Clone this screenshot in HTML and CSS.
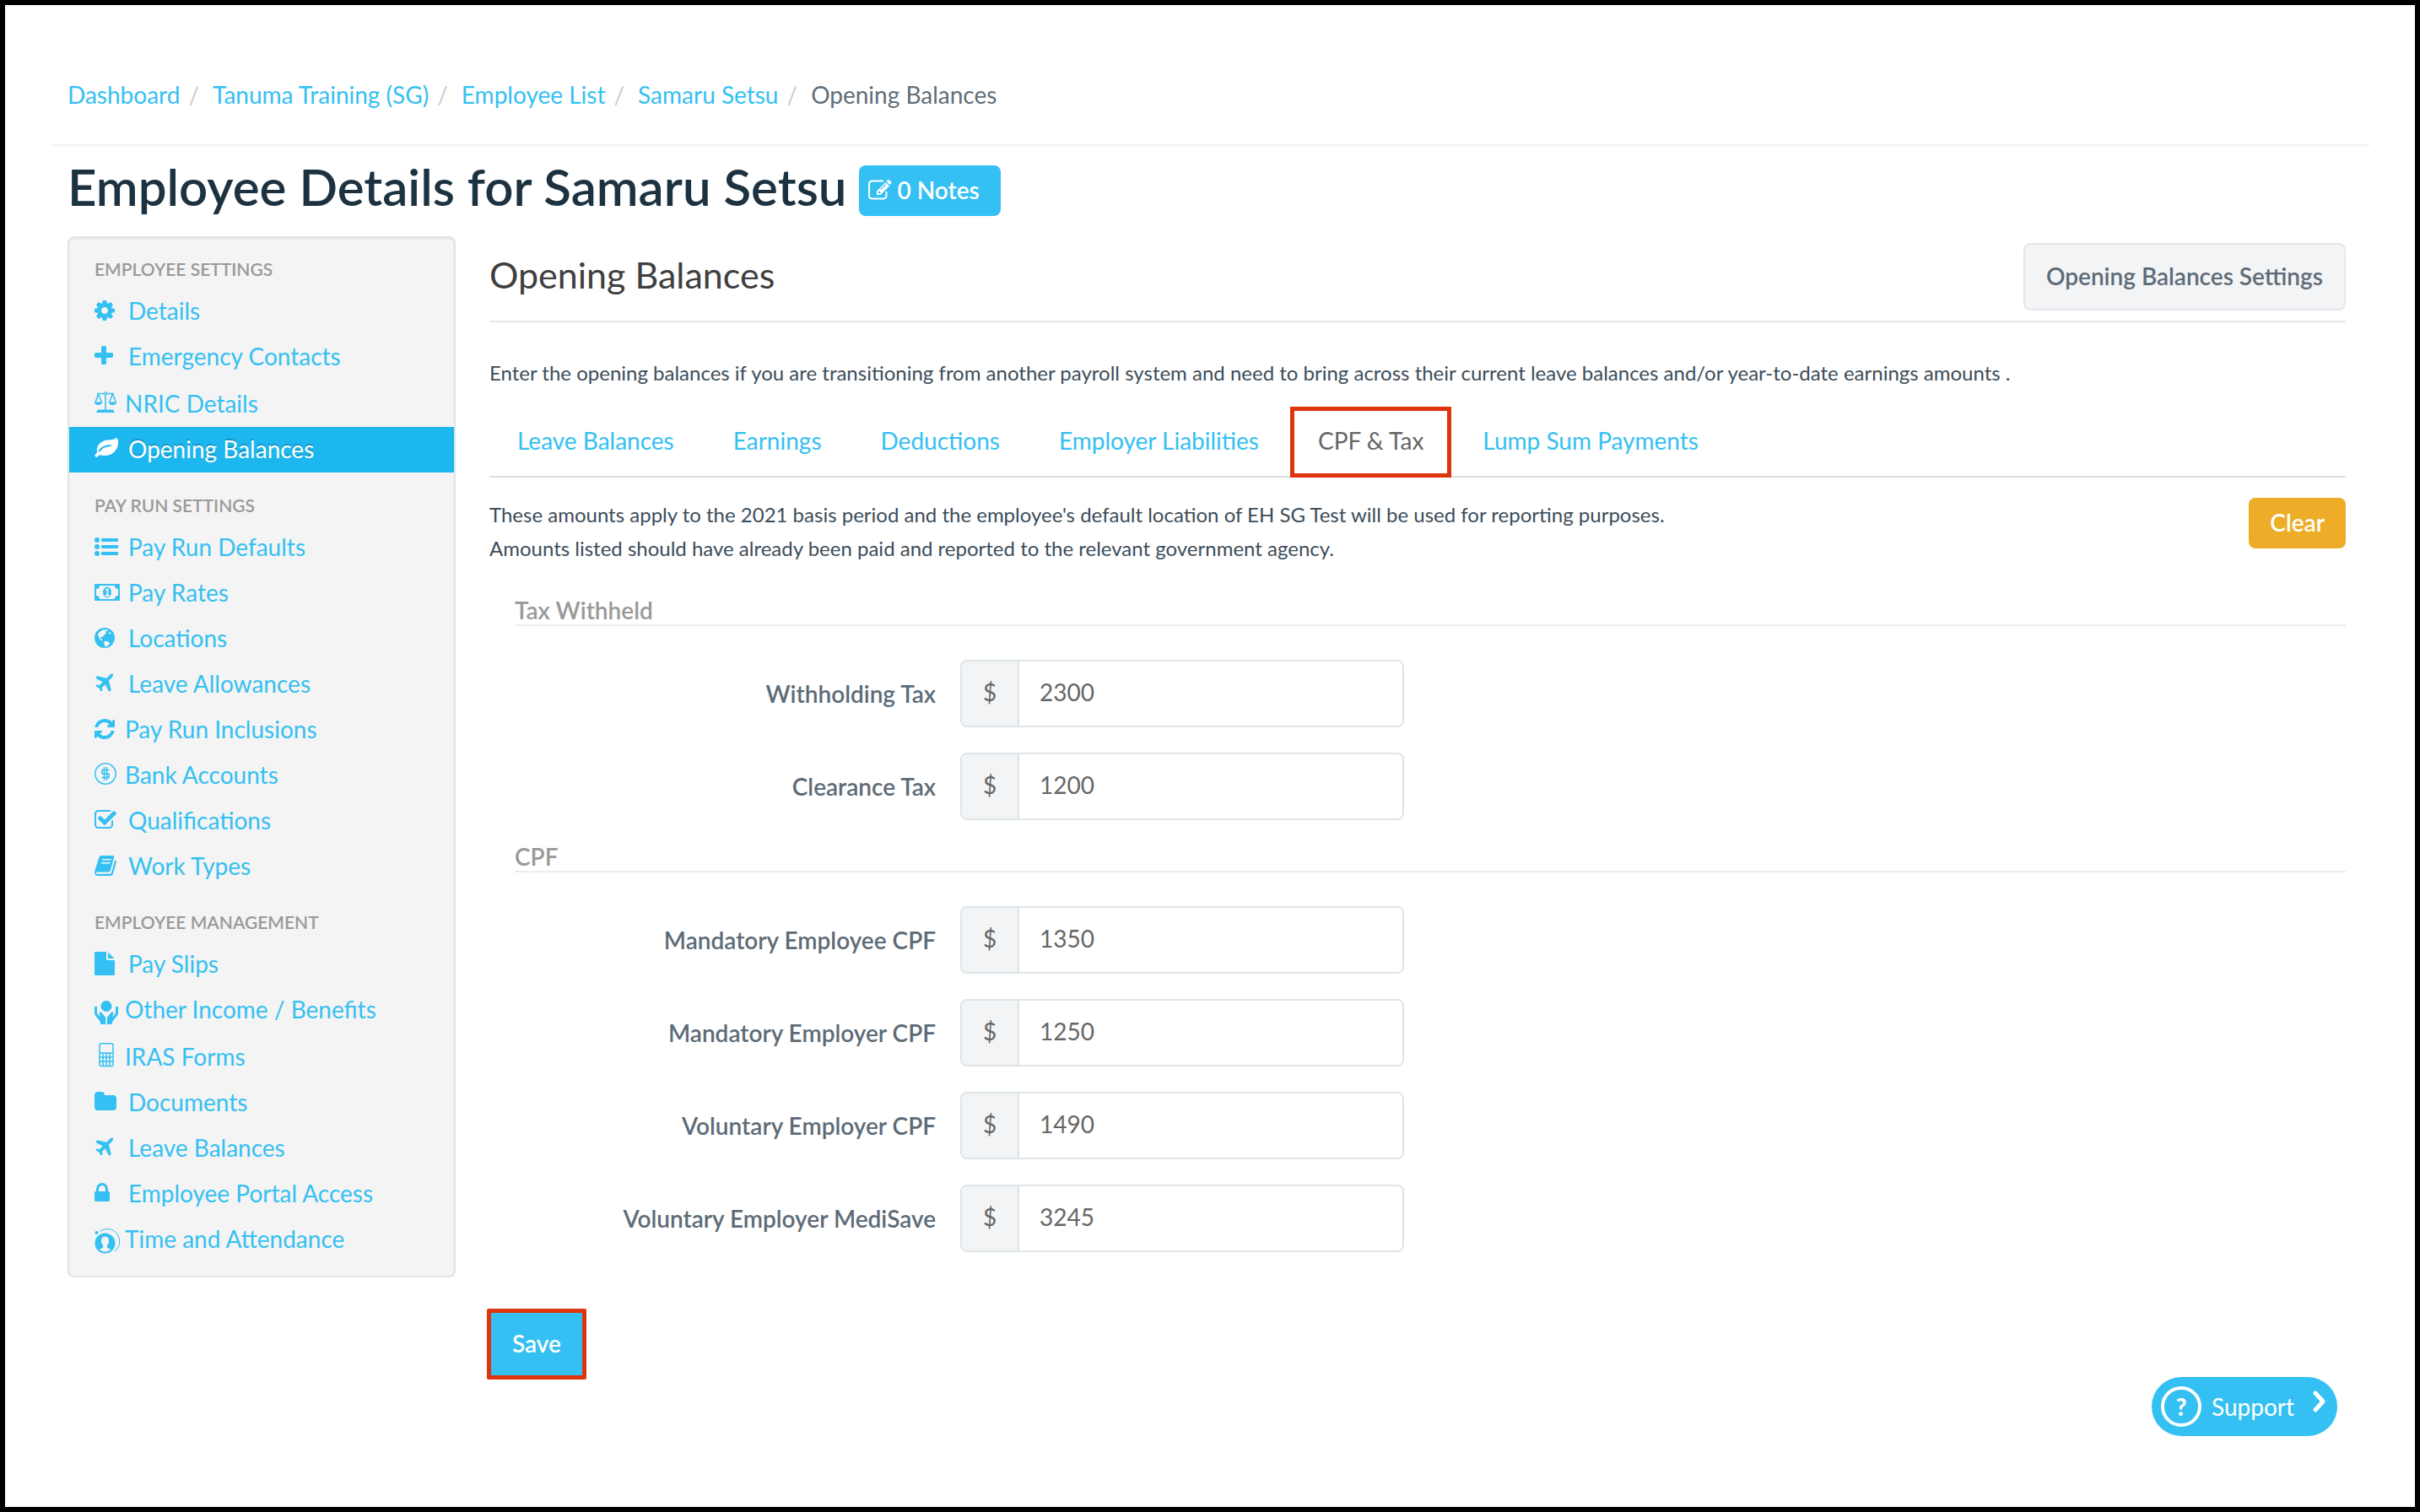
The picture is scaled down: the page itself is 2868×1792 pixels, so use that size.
FILE: index.html
```html
<!DOCTYPE html>
<html lang="en">
<head>
    <meta charset="UTF-8">
    <meta name="viewport" content="width=device-width, initial-scale=1.0">
    <title>Opening Balances</title>
    <link rel="stylesheet" href="styles.css">
</head>
<body>
    <svg class="sprite" aria-hidden="true">
        <symbol id="icon-plane" viewBox="0 0 28 28">
            <path d="M21.600 2.400c1 1 .2 3.300-1.300 4.800l-3.400 3.400 2.800 11.200-2.400 2.100-4.700-8.600-3.700 3.600.6 3.400-1.700 1.500-2.400-4.200-4.300-2.500 1.500-1.700 3.500.6 3.500-3.700-8.400-4.600 2.100-2.400 11 2.500 3.200-3.300c1.500-1.500 3.200-2.900 4.100-2.100z"/>
        </symbol>
    </svg>

    <div class="page">
        <nav class="breadcrumb" aria-label="Breadcrumb">
            <a href="#">Dashboard</a><span class="divider">/</span>
            <a href="#">Tanuma Training (SG)</a><span class="divider">/</span>
            <a href="#">Employee List</a><span class="divider">/</span>
            <a href="#">Samaru Setsu</a><span class="divider">/</span>
            <span class="current">Opening Balances</span>
        </nav>

        <div class="content">
            <div class="page-title">
                <h1>Employee Details for Samaru Setsu</h1>
                <button class="btn btn-info btn-notes" type="button">
                    <svg class="icon" viewBox="0 0 28 28">
                        <path d="M19 3.500H6Q2 3.500 2 7.500v13.500Q2 24.500 6 24.500h12.500q4 0 4-4v-4.500" fill="none" stroke="currentColor" stroke-width="2"/>
                        <path fill-rule="evenodd" d="M11 15.500 21.500 5l4.500 4.500L15.500 20H11zM13 16v2.200h1.800l1-1-2-2zM15.200 13.200l.8.800 6-6-.8-.8zM22.500 4l1.500-1.500q1-1 2 0L28 4.500q1 1 0 2L26.700 8z"/>
                    </svg>
                    0 Notes
                </button>
            </div>

            <div class="columns">
                <aside class="sidebar">
                    <div class="nav-group">
                        <h3 class="nav-header">EMPLOYEE SETTINGS</h3>
                        <a class="nav-item" href="#">
                            <svg class="icon" viewBox="128 0 1792 1792"><path d="M1152 896q0-106-75-181t-181-75-181 75-75 181 75 181 181 75 181-75 75-181zm512-109v222q0 12-8 23t-20 13l-185 28q-19 54-39 91 35 50 107 138 10 12 10 25t-9 23q-27 37-99 108t-94 71q-12 0-26-9l-138-108q-44 23-91 38-16 136-29 186-7 28-36 28h-222q-14 0-24.500-8.500t-11.500-21.500l-28-184q-49-16-90-37l-141 107q-10 9-25 9-14 0-25-11-126-114-165-168-7-10-7-23 0-12 8-23 15-21 51-66.500t54-70.500q-27-50-41-99l-183-27q-13-2-21-12.500t-8-23.500v-222q0-12 8-23t19-13l186-28q14-46 39-92-40-57-107-138-10-12-10-24 0-10 9-23 26-36 98.500-107.500t94.500-71.500q13 0 26 10l138 107q44-23 91-38 16-136 29-186 7-28 36-28h222q14 0 24.500 8.500t11.500 21.500l28 184q49 16 90 37l142-107q9-9 24-9 13 0 25 10 129 119 165 170 7 8 7 22 0 12-8 23-15 21-51 66.500t-54 70.500q26 50 41 98l183 28q13 2 21 12.500t8 23.500z"/></svg>
                            Details
                        </a>
                        <a class="nav-item" href="#">
                            <svg class="icon" viewBox="192 0 1792 1792"><path d="M1600 736v192q0 40-28 68t-68 28h-416v416q0 40-28 68t-68 28h-192q-40 0-68-28t-28-68v-416h-416q-40 0-68-28t-28-68v-192q0-40 28-68t68-28h416v-416q0-40 28-68t68-28h192q40 0 68 28t28 68v416h416q40 0 68 28t28 68z"/></svg>
                            Emergency Contacts
                        </a>
                        <a class="nav-item nav-item-image nav-item-tall" href="#">
                            <svg class="icon" viewBox="0 0 28 28">
                                <path d="M3 2.500h20M13 4v18M4.500 3 1 13M4.500 3 8.500 13M21.500 3 17.500 13M21.500 3 25.500 13" fill="none" stroke="currentColor" stroke-width="1.500"/>
                                <circle cx="13" cy="2.500" r="2.200"/><circle cx="13" cy="2.500" r="1" fill="#f4f4f4"/>
                                <path d="M0 12.500h9c0 2-1.500 3.500-4.500 3.500S0 14.500 0 12.500zM17 12.500h9c0 2-1.500 3.500-4.500 3.500S17 14.500 17 12.500zM4 21.500h18l2 3.500H2z"/>
                            </svg>
                            NRIC Details
                        </a>
                        <a class="nav-item active" href="#" aria-current="page">
                            <svg class="icon" viewBox="0 0 28 28"><path fill-rule="evenodd" d="M26.500 1c2.500 3 2.500 11-3 16.500-4 4-10 5.500-15.500 4-2-.5-3 0-4.500 2-1.500 1-3-.5-3.200-1.700C1 20 3.500 19 3 17.500 2 12 5 6.500 12 4.300c5-1.500 10-.3 13-2.800zM6 17.200c4-4.500 7.500-6.200 13.300-6.300.9-.1.900-1.600 0-1.700-6.500-.2-11 2-14.600 6.500-.7 1 .4 2.200 1.300 1.500z"/></svg>
                            Opening Balances
                        </a>
                    </div>

                    <div class="nav-group">
                        <h3 class="nav-header">PAY RUN SETTINGS</h3>
                        <a class="nav-item" href="#">
                            <svg class="icon" viewBox="0 0 28 28"><circle cx="3" cy="6" r="3"/><circle cx="3" cy="14" r="3"/><circle cx="3" cy="22" r="3"/><rect x="8" y="4" width="20" height="4" rx="1"/><rect x="8" y="12" width="20" height="4" rx="1"/><rect x="8" y="20" width="20" height="4" rx="1"/></svg>
                            Pay Run Defaults
                        </a>
                        <a class="nav-item" href="#">
                            <svg class="icon" viewBox="0 0 28 28">
                                <path fill-rule="evenodd" d="M1 4h28q1 0 1 1v18q0 1-1 1H1q-1 0-1-1V5q0-1 1-1zM6 6q0 4-4 4v8q4 0 4 4h18q0-4 4-4v-8q-4 0-4-4z"/>
                                <ellipse cx="15" cy="14" rx="5" ry="6.500"/>
                                <path d="M13 11.500 15.500 10v7.500M12.500 18h5" fill="none" stroke="#f4f4f4" stroke-width="1.800"/>
                            </svg>
                            Pay Rates
                        </a>
                        <a class="nav-item" href="#">
                            <svg class="icon" viewBox="0 0 28 28">
                                <circle cx="12" cy="14" r="12"/>
                                <path fill="#f4f4f4" d="M4.500 8.500q3-3.500 6.500-4.500l2.500.5 2.500 0-1 1.500-2.500.5 1.500 2-3 2.500-1.500 2-2-.5-.5 2 2 1 .5 2-3-1.500L5 12.500 4 11zM17.500 6.500l2 2-1 1-1.500-1zM11 19l2.500-1.500 3.500 1.500 1.500 1.500-3 3-3 1-1-3.500z"/>
                            </svg>
                            Locations
                        </a>
                        <a class="nav-item" href="#">
                            <svg class="icon"><use href="#icon-plane"/></svg>
                            Leave Allowances
                        </a>
                        <a class="nav-item nav-item-image" href="#">
                            <svg class="icon" viewBox="128 0 1792 1792"><path d="M1639 1056q0 5-1 7-64 268-268 434.500t-478 166.500q-146 0-282.500-55t-243.500-157l-129 129q-19 19-45 19t-45-19-19-45v-448q0-26 19-45t45-19h448q26 0 45 19t19 45-19 45l-137 137q71 66 161 102t187 36q134 0 250-65t186-179q11-17 53-117 8-23 30-23h192q13 0 22.500 9.500t9.500 22.500zm25-800v448q0 26-19 45t-45 19h-448q-26 0-45-19t-19-45 19-45l138-138q-148-137-349-137-134 0-250 65t-186 179q-11 17-53 117-8 23-30 23h-199q-13 0-22.500-9.500t-9.500-22.500v-7q65-268 270-434.500t480-166.500q146 0 284 55.500t245 156.500l130-129q19-19 45-19t45 19 19 45z"/></svg>
                            Pay Run Inclusions
                        </a>
                        <a class="nav-item nav-item-image" href="#">
                            <svg class="icon" viewBox="0 0 28 28">
                                <g fill="none" stroke="currentColor" stroke-width="1.500"><circle cx="13" cy="13" r="12.200"/><path d="M17.500 8.500H9v4.500h8v4.500H8.500M11.500 5v16M14.500 5v16"/></g>
                            </svg>
                            Bank Accounts
                        </a>
                        <a class="nav-item" href="#">
                            <svg class="icon" viewBox="64 0 1792 1792"><path d="M1472 930v318q0 119-84.500 203.500t-203.500 84.500h-832q-119 0-203.500-84.500t-84.500-203.500v-832q0-119 84.500-203.500t203.500-84.500h832q63 0 117 25 15 7 18 23 3 17-9 29l-49 49q-10 10-23 10-3 0-9-2-23-6-45-6h-832q-66 0-113 47t-47 113v832q0 66 47 113t113 47h832q66 0 113-47t47-113v-254q0-13 9-22l64-64q10-10 23-10 6 0 12 3 20 8 20 29zm231-489l-814 814q-24 24-57 24t-57-24l-430-430q-24-24-24-57t24-57l110-110q24-24 57-24t57 24l263 263 647-647q24-24 57-24t57 24l110 110q24 24 24 57t-24 57z"/></svg>
                            Qualifications
                        </a>
                        <a class="nav-item" href="#">
                            <svg class="icon" viewBox="0 0 28 28">
                                <path fill-rule="evenodd" d="M8 2h13.500q2 0 1.500 2.200L19 19.500q-.5 2-2.500 2H3q-1.500 0-1.300 1.200.2 1.100 1.700 1.100H18q1.500 0 2-1.500L24.200 7.500q2.200.8 1.600 2.800L22 23.500Q21.200 26 18.500 26H3.500Q0 26 .2 22.500L.5 19.500 5.500 4Q6.200 2 8 2zM9.500 6 9 7.600h10.500L20 6zM8.300 10l-.5 1.600h10.500l.5-1.600z"/>
                            </svg>
                            Work Types
                        </a>
                    </div>

                    <div class="nav-group">
                        <h3 class="nav-header">EMPLOYEE MANAGEMENT</h3>
                        <a class="nav-item" href="#">
                            <svg class="icon" viewBox="0 0 28 28"><path d="M1.500 0H14v8.500q0 1.500 1.500 1.500H24v16.500q0 1.500-1.500 1.500h-21Q0 28 0 26.500v-25Q0 0 1.500 0zM16 .5 23.500 8H16z"/></svg>
                            Pay Slips
                        </a>
                        <a class="nav-item nav-item-image" href="#">
                            <svg class="icon" viewBox="0 0 28 28">
                                <circle cx="14" cy="10.500" r="6.500"/>
                                <path d="M0 12q0-1.500 1.500-1.500T3 12v7l3 3.500 1 .3-1.500-3.500q-.3-1.800 1.300-2 1 0 1.700 1l4 4.700q.7 1 .7 2.200V32H7.500Q7 28.500 5 26.500L1 21.500Q0 20 0 18.500zM28 12q0-1.500-1.500-1.500T25 12v7l-3 3.500-1 .3 1.500-3.500q.3-1.800-1.300-2-1 0-1.700 1l-4 4.700q-.7 1-.7 2.200V32h5.700q.5-3.500 2.500-5.500l4-5q1-1.500 1-3z"/>
                            </svg>
                            Other Income / Benefits
                        </a>
                        <a class="nav-item nav-item-image nav-item-tall" href="#">
                            <svg class="icon" viewBox="0 0 28 28">
                                <path d="M6 1.500Q6-1.200 8-1.200h12q2 0 2 2.700v22q0 2-2 2H8q-2 0-2-2zM6 10h16M6 15h16M6 20h16M10 10v15M14 10v15M18 10v15" fill="none" stroke="currentColor" stroke-width="1.500"/>
                            </svg>
                            IRAS Forms
                        </a>
                        <a class="nav-item" href="#">
                            <svg class="icon" viewBox="64 0 1792 1792"><path d="M1728 608v704q0 92-66 158t-158 66h-1216q-92 0-158-66t-66-158v-960q0-92 66-158t158-66h320q92 0 158 66t66 158v32h672q92 0 158 66t66 158z"/></svg>
                            Documents
                        </a>
                        <a class="nav-item" href="#">
                            <svg class="icon"><use href="#icon-plane"/></svg>
                            Leave Balances
                        </a>
                        <a class="nav-item" href="#">
                            <svg class="icon" viewBox="320 0 1792 1792"><path d="M640 768h512v-192q0-106-75-181t-181-75-181 75-75 181v192zm832 96v576q0 40-28 68t-68 28h-960q-40 0-68-28t-28-68v-576q0-40 28-68t68-28h32v-192q0-184 132-316t316-132 316 132 132 316v192h32q40 0 68 28t28 68z"/></svg>
                            Employee Portal Access
                        </a>
                        <a class="nav-item nav-item-image" href="#">
                            <svg class="icon" viewBox="0 0 28 28">
                                <path d="M6 5.500A13.500 13.500 0 0 1 24 29" fill="none" stroke="currentColor"/>
                                <circle cx="2.500" cy="7" r="2"/>
                                <circle cx="12.500" cy="19.500" r="12"/>
                                <path fill="#f4f4f4" d="M12.500 11.500q4.500 0 4.500 5 0 4-2.200 5.500v2q0 1 4.700 2.800-3 2.700-7 2.700T5.500 26.800q4.700-1.800 4.700-2.800v-2Q8 20.500 8 16.500q0-5 4.500-5z"/>
                            </svg>
                            Time and Attendance
                        </a>
                    </div>
                </aside>

                <main class="main">
                    <div class="section-header">
                        <h2>Opening Balances</h2>
                        <button class="btn btn-default" type="button">Opening Balances Settings</button>
                    </div>

                    <p class="intro">Enter the opening balances if you are transitioning from another payroll system and need to bring across their current leave balances and/or year-to-date earnings amounts .</p>

                    <nav class="tabs" aria-label="Balances">
                        <a class="tab" href="#">Leave Balances</a>
                        <a class="tab" href="#">Earnings</a>
                        <a class="tab" href="#">Deductions</a>
                        <a class="tab" href="#">Employer Liabilities</a>
                        <a class="tab active" href="#" aria-current="page">CPF &amp; Tax</a>
                        <a class="tab" href="#">Lump Sum Payments</a>
                    </nav>

                    <form>
                        <div class="notice">
                            <p>These amounts apply to the 2021 basis period and the employee's default location of EH SG Test will be used for reporting purposes.<br>
                            Amounts listed should have already been paid and reported to the relevant government agency.</p>
                            <button class="btn btn-warning" type="button">Clear</button>
                        </div>

                        <section class="field-group">
                            <h4 class="legend">Tax Withheld</h4>
                            <div class="field">
                                <label for="withholding-tax">Withholding Tax</label>
                                <div class="input-group">
                                    <span class="addon">$</span>
                                    <input type="text" id="withholding-tax" value="2300">
                                </div>
                            </div>
                            <div class="field">
                                <label for="clearance-tax">Clearance Tax</label>
                                <div class="input-group">
                                    <span class="addon">$</span>
                                    <input type="text" id="clearance-tax" value="1200">
                                </div>
                            </div>
                        </section>

                        <section class="field-group">
                            <h4 class="legend">CPF</h4>
                            <div class="field">
                                <label for="mandatory-employee">Mandatory Employee CPF</label>
                                <div class="input-group">
                                    <span class="addon">$</span>
                                    <input type="text" id="mandatory-employee" value="1350">
                                </div>
                            </div>
                            <div class="field">
                                <label for="mandatory-employer">Mandatory Employer CPF</label>
                                <div class="input-group">
                                    <span class="addon">$</span>
                                    <input type="text" id="mandatory-employer" value="1250">
                                </div>
                            </div>
                            <div class="field">
                                <label for="voluntary-employer">Voluntary Employer CPF</label>
                                <div class="input-group">
                                    <span class="addon">$</span>
                                    <input type="text" id="voluntary-employer" value="1490">
                                </div>
                            </div>
                            <div class="field">
                                <label for="medisave">Voluntary Employer MediSave</label>
                                <div class="input-group">
                                    <span class="addon">$</span>
                                    <input type="text" id="medisave" value="3245">
                                </div>
                            </div>
                        </section>

                        <button class="btn btn-info btn-save" type="submit">Save</button>
                    </form>
                </main>
            </div>
        </div>

        <button class="support" type="button">
            <span class="support-icon">?</span>
            Support
            <svg class="support-arrow" viewBox="0 0 18 28"><path d="M4 4l9 10-9 10" fill="none" stroke="currentColor" stroke-width="5" stroke-linecap="round" stroke-linejoin="round"/></svg>
        </button>
    </div>
</body>
</html>
```
FILE: styles.css
```css
* {
    box-sizing: border-box;
}
body {
    margin: 0;
    background: #fff;
    color: #3c4d5a;
    font-family: Lato, "Open Sans", sans-serif;
    font-size: 28px;
}
h1, h2, h3, h4, p {
    margin: 0;
}
a {
    color: #34c0f2;
    text-decoration: none;
}
.sprite {
    position: absolute;
    width: 0;
    height: 0;
}
.icon {
    width: 28px;
    height: 28px;
    flex: none;
    overflow: visible;
    fill: currentColor;
}
.page {
    min-height: 100vh;
    padding: 0 54px;
    border: 6px solid #000;
}

/* Breadcrumb */
.breadcrumb {
    display: flex;
    padding: 86px 20px 39px;
    border-bottom: 2px solid #f2f2f2;
    line-height: 40px;
}
.breadcrumb .divider {
    padding: 0 16px 0 10px;
    color: #ccc;
}
.breadcrumb .current {
    color: #616e79;
}

.content {
    padding: 23px 28px 0 20px;
}
.page-title {
    display: flex;
    align-items: center;
    gap: 14px;
    margin-bottom: 24px;
}
.page-title h1 {
    padding-bottom: 10px;
    color: #1d3240;
    font-size: 60px;
    font-weight: 600;
    line-height: 50px;
}

/* Buttons */
.btn {
    height: 60px;
    padding: 0 25px 2px;
    border: 0;
    border-radius: 8px;
    color: #fff;
    font-family: inherit;
    font-size: 28px;
    font-weight: 600;
    white-space: nowrap;
    cursor: pointer;
}
.btn-info {
    background: #34c0f2;
}
.btn-warning {
    background: #edad28;
}
.btn-default {
    height: 80px;
    border: 2px solid #e4e8ec;
    background: #f3f4f6;
    color: #5d6b77;
}
.btn-notes {
    display: flex;
    align-items: center;
    gap: 8px;
    padding-left: 10px;
}
.btn-save {
    height: 84px;
    margin: 67px 0 0 -3px;
    border: 5px solid #df350d;
    border-radius: 2px;
}

.columns {
    display: flex;
    align-items: flex-start;
    gap: 40px;
}

/* Sidebar */
.sidebar {
    flex: 0 0 460px;
    padding: 20px 0 16px;
    border: 2px solid #e3e3e3;
    border-radius: 8px;
    background: #f4f4f4;
    box-shadow: inset 0 2px 2px rgba(0, 0, 0, .05);
}
.nav-group + .nav-group {
    margin-top: 22px;
}
.nav-header {
    padding: 0 30px 6px;
    color: #999;
    font-size: 21px;
    font-weight: 600;
    line-height: 34px;
}
.nav-item {
    display: flex;
    align-items: center;
    gap: 12px;
    height: 54px;
    padding: 0 30px 2px;
}
.nav-item-image {
    gap: 8px;
}
.nav-item-tall {
    height: 56px;
    padding-bottom: 0;
}
.nav-item.active {
    background: #1cb7ee;
    color: #fff;
    text-shadow: 0 -2px 0 rgba(0, 0, 0, .2);
}

/* Main */
.main {
    flex: 1;
    min-width: 0;
    padding-top: 8px;
}
.section-header {
    display: flex;
    align-items: center;
    justify-content: space-between;
    padding-bottom: 12px;
    border-bottom: 2px solid #e5e5e5;
}
.section-header h2 {
    padding-bottom: 6px;
    color: #3f3f3f;
    font-size: 43px;
    font-weight: 400;
}
.intro,
.notice {
    font-size: 24px;
    line-height: 40px;
}
.intro {
    margin: 40px 0 20px;
}
.tabs {
    display: flex;
    gap: 4px;
    border-bottom: 2px solid #ddd;
}
.tab {
    padding: 20px 33px 22px;
    line-height: 40px;
}
.tab.active {
    margin-bottom: -2px;
    box-shadow: inset 0 0 0 5px #df350d;
    color: #666;
}
.notice {
    display: flex;
    align-items: flex-start;
    justify-content: space-between;
    margin: 24px 0 36px;
}

/* Form fields */
.field-group {
    margin-top: 26px;
    padding-left: 30px;
}
.legend {
    margin-bottom: 40px;
    border-bottom: 2px solid #eee;
    color: #999;
    font-size: 28px;
    font-weight: 600;
    line-height: 34px;
}
.field {
    display: grid;
    grid-template-columns: 23% minmax(0, 526px);
    column-gap: 29px;
    align-items: center;
}
.field + .field {
    margin-top: 30px;
}
.field label {
    color: #5d6b77;
    font-weight: 600;
    text-align: right;
}
.input-group {
    display: flex;
    height: 80px;
    overflow: hidden;
    border: 2px solid #dee5e9;
    border-radius: 8px;
}
.addon {
    width: 68px;
    padding-bottom: 4px;
    border-right: 2px solid #dee5e9;
    background: #f3f4f6;
    color: #666;
    line-height: 72px;
    text-align: center;
}
.input-group input {
    flex: 1;
    min-width: 0;
    padding: 0 24px 4px;
    border: 0;
    outline: 0;
    color: #666;
    font-family: inherit;
    font-size: 28px;
}

/* Support launcher */
.support {
    position: fixed;
    right: 98px;
    bottom: 90px;
    display: flex;
    align-items: center;
    gap: 12px;
    width: 220px;
    height: 70px;
    padding: 0 12px 0 11px;
    border: 0;
    border-radius: 35px;
    background: #34c0f2;
    color: #fff;
    font-family: inherit;
    font-size: 28px;
    cursor: pointer;
}
.support-icon {
    width: 48px;
    height: 48px;
    border: 4px solid #fff;
    border-radius: 50%;
    font-weight: 900;
    line-height: 40px;
}
.support-arrow {
    width: 18px;
    height: 28px;
    margin: 0 0 12px auto;
}
```
